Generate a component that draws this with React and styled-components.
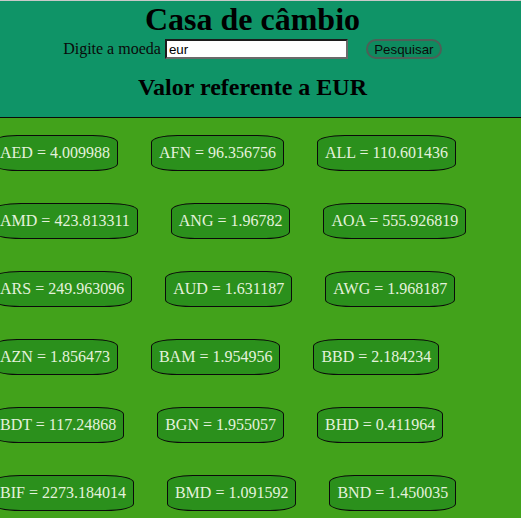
import styled, { createGlobalStyle } from 'styled-components'

const GlobalStyle = createGlobalStyle`
  html, body {
    margin: 0;
    padding: 0;
    background-color: #42a21b;
    overflow: hidden;
  }
  body {
    border-top: 1px solid #c9c9c9;
    font-family: "Liberation Serif", "Times New Roman", serif;
  }
`

const Header = styled.header`
  background-color: #0f9467;
  border-bottom: 1px solid #0a0a0a;
  height: 116px;
  padding-right: 16px;
  display: flex;
  flex-direction: column;
  align-items: center;
`

const Title = styled.h1`
  margin: 0;
  font-size: 32px;
  line-height: 37px;
  font-weight: 700;
  color: #000;
`

const SearchRow = styled.form`
  display: flex;
  align-items: center;
  height: 22px;
  font-size: 16px;
  color: #0a0a0a;
`

const Label = styled.label`
  margin-right: 4px;
`

const Input = styled.input`
  box-sizing: border-box;
  width: 183px;
  height: 20px;
  padding: 1px 2px;
  border: 2px solid;
  border-color: #1c1c1c #6a6a6a #6a6a6a #1c1c1c;
  background: #fff;
  font-family: "Liberation Sans", Arial, sans-serif;
  font-size: 13.33px;
  color: #000;
  outline: none;
`

const Button = styled.button`
  box-sizing: border-box;
  margin-left: 18px;
  width: 76px;
  height: 20px;
  padding: 0;
  border: 2px solid #4e5f57;
  border-radius: 10px;
  background: #0f8a5f;
  font-family: "Liberation Sans", Arial, sans-serif;
  font-size: 13.33px;
  color: #0a0a0a;
`

const Subtitle = styled.h2`
  margin: 13px 0 0;
  font-size: 24px;
  line-height: 28px;
  font-weight: 700;
  color: #000;
`

const Rates = styled.main`
  display: flex;
  flex-wrap: wrap;
  align-items: flex-start;
  gap: 32px 33px;
  margin-left: -8px;
  width: calc(100% + 8px);
  padding-top: 17px;
`

const RateCard = styled.div`
  box-sizing: border-box;
  height: 36px;
  padding: 8px 7px;
  border: 1px solid #0a0a0a;
  border-radius: 20%;
  background-color: #2b901c;
  color: #e4f2dc;
  font-size: 16px;
  line-height: 18px;
  white-space: nowrap;
`

const rates = [
  ['AED', '4.009988'],
  ['AFN', '96.356756'],
  ['ALL', '110.601436'],
  ['AMD', '423.813311'],
  ['ANG', '1.96782'],
  ['AOA', '555.926819'],
  ['ARS', '249.963096'],
  ['AUD', '1.631187'],
  ['AWG', '1.968187'],
  ['AZN', '1.856473'],
  ['BAM', '1.954956'],
  ['BBD', '2.184234'],
  ['BDT', '117.24868'],
  ['BGN', '1.955057'],
  ['BHD', '0.411964'],
  ['BIF', '2273.184014'],
  ['BMD', '1.091592'],
  ['BND', '1.450035'],
]

export default function App() {
  return (
    <>
      <GlobalStyle />
      <Header>
        <Title>Casa de câmbio</Title>
        <SearchRow onSubmit={e => e.preventDefault()}>
          <Label htmlFor='moeda'>Digite a moeda</Label>
          <Input id='moeda' defaultValue='eur' />
          <Button type='submit'>Pesquisar</Button>
        </SearchRow>
        <Subtitle>Valor referente a EUR</Subtitle>
      </Header>
      <Rates>
        {rates.map(([code, value]) => (
          <RateCard key={code}>{code} = {value}</RateCard>
        ))}
      </Rates>
    </>
  )
}
